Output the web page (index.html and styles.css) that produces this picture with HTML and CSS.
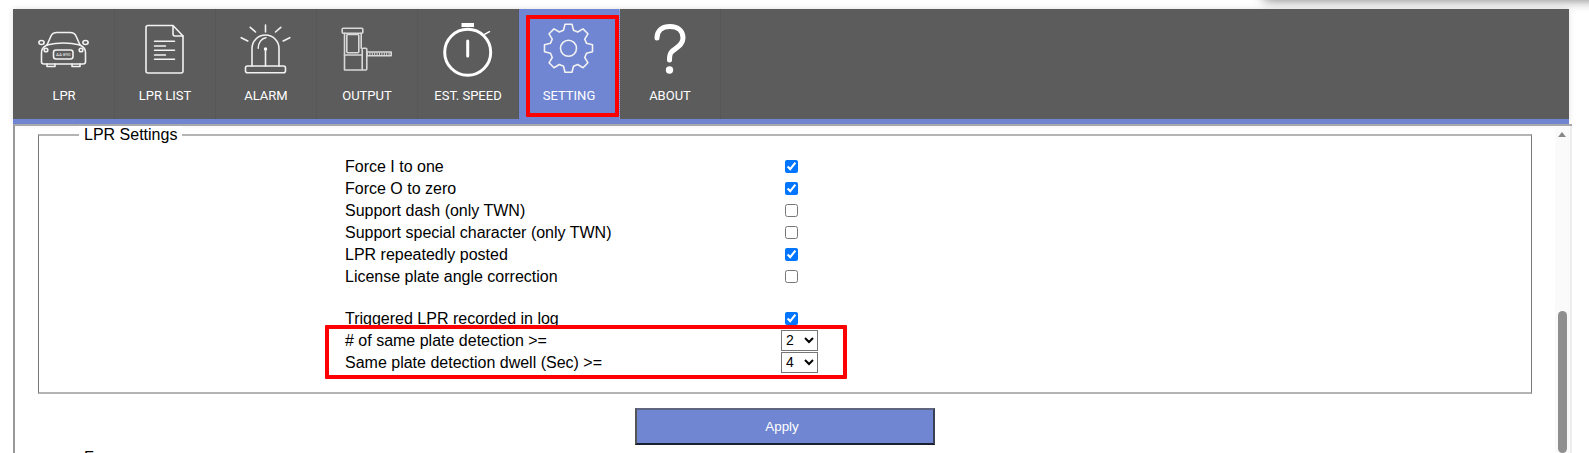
FILE: index.html
```html
<!DOCTYPE html>
<html lang="en">
<head>
    <meta charset="UTF-8">
    <meta name="viewport" content="width=device-width, initial-scale=1.0">
    <title>LPR Settings</title>
    <link rel="stylesheet" href="styles.css">
</head>
<body>
    <!-- Shadow of a window that sits above the screenshot -->
    <div class="window-shadow"></div>

    <nav class="nav">
        <a class="nav-item" href="#">
            <svg class="nav-icon" viewBox="0 0 60 60">
                <path d="M13 26 L17 17 Q18.5 13.5 23 13.5 H36 Q40.5 13.5 42 17 L46 26"/>
                <path d="M13 26 Q29.5 22 46 26"/>
                <path d="M13 26 Q7 29 7.5 34 V43 Q7.5 45 10 45 H49 Q51.5 45 51.5 43 V34 Q52 29 46 26"/>
                <ellipse cx="7.5" cy="23.5" rx="2.6" ry="2"/>
                <ellipse cx="51.5" cy="23.5" rx="2.6" ry="2"/>
                <circle cx="12" cy="31" r="1.8"/>
                <circle cx="47" cy="31" r="1.8"/>
                <rect x="19.5" y="31" width="19.5" height="9" rx="2.5"/>
                <text class="plate-text" x="29.2" y="37.2" text-anchor="middle">AA-890</text>
                <path d="M13 45 V47.5 H21 V45 M38 45 V47.5 H46 V45"/>
            </svg>
            <span class="nav-label">LPR</span>
        </a>
        <a class="nav-item" href="#">
            <svg class="nav-icon" viewBox="0 0 60 60">
                <path d="M38 6.5 H13 Q11 6.5 11 8.5 V52 Q11 54 13 54 H46 Q48 54 48 52 V17 Z"/>
                <path d="M38 7 V15 Q38 17 40 17 H48"/>
                <path class="thin" d="M19.5 22.3 H39.5 M19.5 27 H30.5 M19.5 31.3 H39.5 M19.5 36 H30.5 M19.5 40.3 H39.5"/>
            </svg>
            <span class="nav-label">LPR LIST</span>
        </a>
        <a class="nav-item" href="#">
            <svg class="nav-icon" viewBox="0 0 60 60">
                <path d="M29.5 6 V13 M14.2 8.3 L19.5 13 M44.8 8.3 L39.5 13 M5.2 18.7 L11.8 22 M53.8 18.7 L47.2 22"/>
                <path d="M16 47 V29.5 A13.5 13.5 0 0 1 43 29.5 V47"/>
                <rect x="9.5" y="47" width="40" height="6.7" rx="2"/>
                <path class="thin" d="M22.2 29.3 A8.5 10.5 0 0 1 30 18.7"/>
                <path d="M29.5 30 V47"/>
                <circle class="solid" cx="29.5" cy="30" r="1.7"/>
            </svg>
            <span class="nav-label">ALARM</span>
        </a>
        <a class="nav-item" href="#">
            <svg class="nav-icon dim" viewBox="0 0 60 60">
                <rect x="5.2" y="9.3" width="20.6" height="5" rx="1"/>
                <path d="M7.5 14.3 V51 H25.2 M24.2 14.3 V29.3"/>
                <rect x="9.8" y="15.5" width="12" height="18.2" rx="1"/>
                <path d="M7.5 36 H25.2"/>
                <rect x="25.2" y="29.3" width="4.6" height="21.7" rx="1"/>
                <rect x="29.8" y="33" width="24.4" height="3.8"/>
                <path class="thin dash" d="M30 34.9 H54"/>
            </svg>
            <span class="nav-label">OUTPUT</span>
        </a>
        <a class="nav-item" href="#">
            <svg class="nav-icon bold" viewBox="0 0 60 60">
                <circle cx="29.7" cy="33.3" r="23"/>
                <path d="M29.7 22 V37"/>
                <path class="solid" d="M23.5 4 H36 V8 H23.5 Z"/>
                <path class="thin" d="M46.5 15.3 L51.5 12.7"/>
            </svg>
            <span class="nav-label">EST. SPEED</span>
        </a>
        <a class="nav-item active" href="#">
            <svg class="nav-icon" viewBox="0 0 60 60">
                <g transform="translate(29.5 29.3)">
                    <polygon points="-5,-18 -3.5,-24 3.5,-24 5,-18 9.19,-16.26 14.5,-19.45 19.45,-14.5 16.26,-9.19 18,-5 24,-3.5 24,3.5 18,5 16.26,9.19 19.45,14.5 14.5,19.45 9.19,16.26 5,18 3.5,24 -3.5,24 -5,18 -9.19,16.26 -14.5,19.45 -19.45,14.5 -16.26,9.19 -18,5 -24,3.5 -24,-3.5 -18,-5 -16.26,-9.19 -19.45,-14.5 -14.5,-19.45 -9.19,-16.26"/>
                    <circle r="8"/>
                </g>
            </svg>
            <span class="nav-label">SETTING</span>
            <span class="mark mark-nav"></span>
        </a>
        <a class="nav-item" href="#">
            <svg class="nav-icon heavy" viewBox="0 0 60 60">
                <path d="M17 19 C17 11 23 7.5 30 7.5 C38 7.5 43 12 43 19 C43 27 35 29 31.5 33 C30 34.5 29.5 36 29.5 41"/>
                <circle class="solid" cx="29.5" cy="51" r="3.7"/>
            </svg>
            <span class="nav-label">ABOUT</span>
        </a>
    </nav>

    <main class="panel">
        <fieldset class="group">
            <legend>LPR Settings</legend>
            <div class="rows">
                <div class="row"><span class="row-label">Force I to one</span><input type="checkbox" checked></div>
                <div class="row"><span class="row-label">Force O to zero</span><input type="checkbox" checked></div>
                <div class="row"><span class="row-label">Support dash (only TWN)</span><input type="checkbox"></div>
                <div class="row"><span class="row-label">Support special character (only TWN)</span><input type="checkbox"></div>
                <div class="row"><span class="row-label">LPR repeatedly posted</span><input type="checkbox" checked></div>
                <div class="row"><span class="row-label">License plate angle correction</span><input type="checkbox"></div>
                <div class="row-gap"></div>
                <div class="row"><span class="row-label">Triggered LPR recorded in log</span><input type="checkbox" checked></div>
                <div class="row">
                    <span class="row-label"># of same plate detection &gt;=</span>
                    <select><option>2</option></select>
                </div>
                <div class="row">
                    <span class="row-label">Same plate detection dwell (Sec) &gt;=</span>
                    <select><option>4</option></select>
                </div>
                <span class="mark mark-rows"></span>
            </div>
        </fieldset>

        <div class="actions">
            <button type="button" class="apply">Apply</button>
        </div>

        <fieldset class="group next">
            <legend>F</legend>
        </fieldset>

        <!-- Scrollbar -->
        <div class="scrollbar">
            <span class="scroll-up"></span>
            <span class="scroll-thumb"></span>
        </div>
    </main>
</body>
</html>
```

FILE: styles.css
```css
html, body {
    height: 453px;
    overflow: hidden;
}

body {
    font-family: "Liberation Sans", Arial, sans-serif;
    font-size: 16px;
    color: #000;
    background-color: #fff;
    margin: 0;
    padding: 9px 17px 0 13px;
    box-sizing: border-box;
    position: relative;
}

.window-shadow {
    position: absolute;
    top: -12px;
    left: 1264px;
    right: -20px;
    height: 12px;
    box-shadow: 0 0 12px rgba(0, 0, 0, 0.55);
}

.nav {
    display: flex;
    width: 1556px;
    height: 115px;
    box-sizing: border-box;
    padding-left: 1px;
    background-color: #5c5c5c;
    border-bottom: 5px solid #7086d2;
    box-shadow: 0 0 6px rgba(0, 0, 0, 0.12);
    position: relative;
}

.nav-item {
    width: 101px;
    box-sizing: border-box;
    border-right: 1px dotted #535353;
    display: flex;
    flex-direction: column;
    align-items: center;
    padding-top: 10px;
    color: #fff;
    text-decoration: none;
    position: relative;
}

.nav-item.active {
    background-color: #7086d2;
    border-right-color: #9aa8dc;
}

.nav-icon {
    width: 60px;
    height: 60px;
    fill: none;
    stroke: #f2f2f2;
    stroke-width: 1.6;
    stroke-linecap: round;
    stroke-linejoin: round;
}

.nav-icon.dim {
    stroke: #d8d8d8;
}

.nav-icon.bold {
    stroke: #fff;
    stroke-width: 3;
}

.nav-icon.heavy {
    stroke: #fff;
    stroke-width: 5;
}

.nav-icon .thin {
    stroke-width: 1.5;
}

.nav-icon .dash {
    stroke-dasharray: 1 1.4;
    stroke-linecap: butt;
    stroke-width: 3;
}

.nav-icon .solid {
    fill: #fff;
    stroke-width: 0;
}

.plate-text {
    font-family: Roboto, sans-serif;
    font-size: 4.4px;
    fill: #f2f2f2;
    stroke: none;
}

.nav-label {
    font-family: Roboto, Arial, sans-serif;
    font-size: 13px;
    line-height: 14px;
    margin-top: 10px;
}

/* Red marks drawn over the screenshot */
.mark {
    position: absolute;
    border: 4px solid #f00;
    box-sizing: border-box;
    border-radius: 1px;
}

.mark-nav {
    top: 6px;
    left: 7px;
    width: 93px;
    height: 102px;
}

.mark-rows {
    top: 170px;
    left: -20px;
    width: 522px;
    height: 54px;
}

.panel {
    position: relative;
    width: 1559px;
    height: 329px;
    overflow: hidden;
    border-left: 2px solid #999;
    border-top: 2px solid #a8a8a8;
    box-sizing: border-box;
}

.group {
    margin: 0 0 0 23px;
    width: 1494px;
    box-sizing: border-box;
    padding: 11px 0 19px 0;
    border-style: solid;
    border-width: 2px 1px;
    border-color: #b4b4b4 #777;
    min-inline-size: 0;
}

.group legend {
    margin-left: 40px;
    padding: 0 5px;
    background-color: #fff;
    line-height: 18px;
}

.group.next {
    margin-top: 4px;
    border: none;
}

.group.next legend {
    margin-left: 41px;
}

.rows {
    position: relative;
    margin-left: 306px;
    width: 600px;
}

.row {
    display: flex;
    align-items: center;
    height: 22px;
}

.row-label {
    width: 436px;
    flex: none;
    padding-top: 2px;
}

.row-gap {
    height: 20px;
}

.row input[type="checkbox"] {
    margin: 3px 3px 3px 4px;
    width: 13px;
    height: 13px;
}

.row select {
    width: 37px;
    height: 21px;
    font-family: "Liberation Sans", Arial, sans-serif;
    font-size: 14px;
    background-color: #fff;
}

.actions {
    display: flex;
    justify-content: center;
    width: 1540px;
    margin-top: 14px;
}

.apply {
    width: 300px;
    height: 37px;
    padding: 0 8px 0 2px;
    background-color: #7086d2;
    color: #fff;
    font-family: "Liberation Sans", Arial, sans-serif;
    font-size: 13.33px;
    border-style: solid;
    border-width: 2px;
    border-color: #5e6580 #3a4054 #1a2030 #555;
}

.scrollbar {
    position: absolute;
    top: 0;
    bottom: 0;
    right: 0;
    width: 17px;
    background-color: #fafafa;
    border-right: 2px solid #eee;
    box-sizing: border-box;
}

.scroll-up {
    position: absolute;
    top: 6px;
    left: 3px;
    border-left: 4.5px solid transparent;
    border-right: 4.5px solid transparent;
    border-bottom: 5px solid #888;
}

.scroll-thumb {
    position: absolute;
    top: 185px;
    left: 3px;
    width: 9px;
    height: 142px;
    background-color: #8f8f8f;
    border-radius: 5px;
}
```
